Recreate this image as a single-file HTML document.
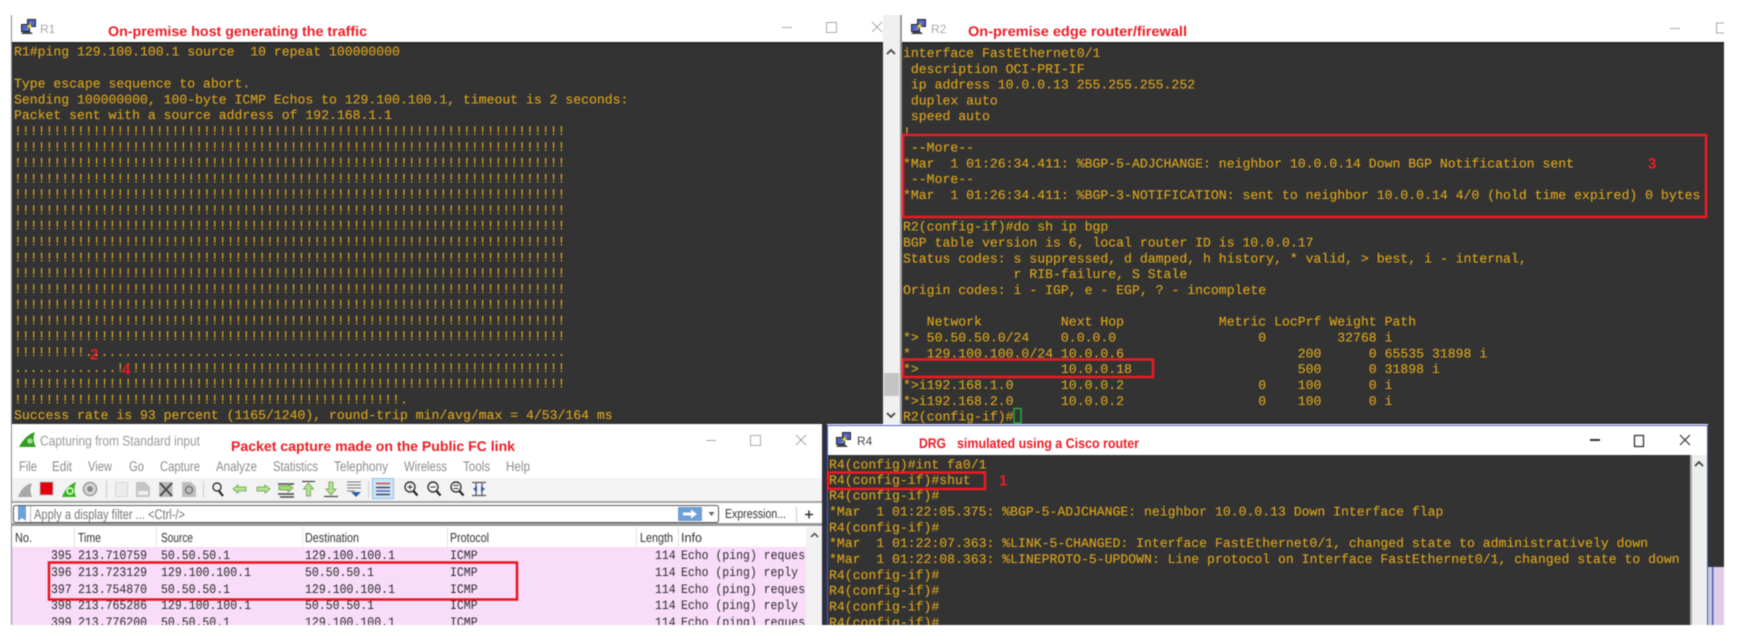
<!DOCTYPE html>
<html lang="en">
<head>
<meta charset="utf-8">
<title>Screenshot</title>
<style>
html,body{margin:0;padding:0;background:#fff;width:1746px;height:642px;overflow:hidden}
svg{display:block;position:absolute;left:0;top:0;filter:blur(.4px);text-rendering:geometricPrecision}
.t{font-family:"Liberation Mono",monospace;font-size:13.14px;fill:#dca51c;stroke:#dca51c;stroke-width:.12px;white-space:pre}
.b .t{font-size:13.16px}
.r{font-family:"Liberation Sans",sans-serif;font-size:14px;font-weight:bold;fill:#ec1c24}
.g{font-family:"Liberation Sans",sans-serif;font-size:14px;fill:#8c8c8c}
.h{font-family:"Liberation Sans",sans-serif;font-size:13px;fill:#333}
.m{font-family:"Liberation Mono",monospace;font-size:13px;fill:#2a2a2a;white-space:pre}
</style>
</head>
<body>
<svg width="1746" height="642" viewBox="0 0 1746 642" xmlns="http://www.w3.org/2000/svg">
<rect width="1746" height="642" fill="#fff"/>
<clipPath id="cw"><rect x="11" y="426" width="795" height="199"/></clipPath>

<!-- R1 window -->
<rect x="11" y="15" width="1" height="610" fill="#8a8a9a"/>
<rect x="12" y="43" width="871" height="381" fill="#333"/>
<rect x="12" y="42" width="871" height="1.5" fill="#222"/>
<rect x="883" y="15" width="17" height="409" fill="#f0f0f0"/>
<rect x="900" y="15" width="2" height="409" fill="#999"/>
<rect x="884" y="373" width="15" height="23" fill="#c4c4c4"/>
<path d="M887 54l4-4 4 4" fill="none" stroke="#444" stroke-width="1.8"/>
<path d="M887 413l4 4 4-4" fill="none" stroke="#444" stroke-width="1.8"/>
<g transform="translate(20,19)"><path d="M3 13h8l2 2H1z" fill="#444"/><rect x="7.5" y=".5" width="8" height="7" fill="#4f62c8" stroke="#222"/><rect x="1.5" y="5.5" width="8" height="7" fill="#4f62c8" stroke="#222"/><path d="M12 3L7 7l2 1-4 4 7-5-2-1z" fill="#f4e020"/></g>
<text x="40" y="33" font-family="Liberation Sans" font-size="12" fill="#aaa">R1</text>
<text class="r" x="108" y="36" textLength="259" lengthAdjust="spacingAndGlyphs">On-premise host generating the traffic</text>
<rect x="782" y="27" width="10" height="1" fill="#aaa"/>
<rect x="826.5" y="22.5" width="10" height="10" fill="none" stroke="#aaa"/>
<path d="M872 22l10 10M882 22l-10 10" stroke="#aaa"/>

<text class="t" x="14" y="55.5">R1#ping 129.100.100.1 source  10 repeat 100000000</text>
<text class="t" x="14" y="87.6">Type escape sequence to abort.</text>
<text class="t" x="14" y="103.4">Sending 100000000, 100-byte ICMP Echos to 129.100.100.1, timeout is 2 seconds:</text>
<text class="t" x="14" y="119.2">Packet sent with a source address of 192.168.1.1</text>
<text class="t" x="14" y="135">!!!!!!!!!!!!!!!!!!!!!!!!!!!!!!!!!!!!!!!!!!!!!!!!!!!!!!!!!!!!!!!!!!!!!!</text>
<text class="t" x="14" y="150.8">!!!!!!!!!!!!!!!!!!!!!!!!!!!!!!!!!!!!!!!!!!!!!!!!!!!!!!!!!!!!!!!!!!!!!!</text>
<text class="t" x="14" y="166.5">!!!!!!!!!!!!!!!!!!!!!!!!!!!!!!!!!!!!!!!!!!!!!!!!!!!!!!!!!!!!!!!!!!!!!!</text>
<text class="t" x="14" y="182.3">!!!!!!!!!!!!!!!!!!!!!!!!!!!!!!!!!!!!!!!!!!!!!!!!!!!!!!!!!!!!!!!!!!!!!!</text>
<text class="t" x="14" y="198.1">!!!!!!!!!!!!!!!!!!!!!!!!!!!!!!!!!!!!!!!!!!!!!!!!!!!!!!!!!!!!!!!!!!!!!!</text>
<text class="t" x="14" y="213.9">!!!!!!!!!!!!!!!!!!!!!!!!!!!!!!!!!!!!!!!!!!!!!!!!!!!!!!!!!!!!!!!!!!!!!!</text>
<text class="t" x="14" y="229.7">!!!!!!!!!!!!!!!!!!!!!!!!!!!!!!!!!!!!!!!!!!!!!!!!!!!!!!!!!!!!!!!!!!!!!!</text>
<text class="t" x="14" y="245.5">!!!!!!!!!!!!!!!!!!!!!!!!!!!!!!!!!!!!!!!!!!!!!!!!!!!!!!!!!!!!!!!!!!!!!!</text>
<text class="t" x="14" y="261.3">!!!!!!!!!!!!!!!!!!!!!!!!!!!!!!!!!!!!!!!!!!!!!!!!!!!!!!!!!!!!!!!!!!!!!!</text>
<text class="t" x="14" y="277.1">!!!!!!!!!!!!!!!!!!!!!!!!!!!!!!!!!!!!!!!!!!!!!!!!!!!!!!!!!!!!!!!!!!!!!!</text>
<text class="t" x="14" y="292.9">!!!!!!!!!!!!!!!!!!!!!!!!!!!!!!!!!!!!!!!!!!!!!!!!!!!!!!!!!!!!!!!!!!!!!!</text>
<text class="t" x="14" y="308.7">!!!!!!!!!!!!!!!!!!!!!!!!!!!!!!!!!!!!!!!!!!!!!!!!!!!!!!!!!!!!!!!!!!!!!!</text>
<text class="t" x="14" y="324.4">!!!!!!!!!!!!!!!!!!!!!!!!!!!!!!!!!!!!!!!!!!!!!!!!!!!!!!!!!!!!!!!!!!!!!!</text>
<text class="t" x="14" y="340.2">!!!!!!!!!!!!!!!!!!!!!!!!!!!!!!!!!!!!!!!!!!!!!!!!!!!!!!!!!!!!!!!!!!!!!!</text>
<text class="t" x="14" y="356">!!!!!!!!!.............................................................</text>
<text class="t" x="14" y="371.8">.............!!!!!!!!!!!!!!!!!!!!!!!!!!!!!!!!!!!!!!!!!!!!!!!!!!!!!!!!!</text>
<text class="t" x="14" y="387.6">!!!!!!!!!!!!!!!!!!!!!!!!!!!!!!!!!!!!!!!!!!!!!!!!!!!!!!!!!!!!!!!!!!!!!!</text>
<text class="t" x="14" y="403.4">!!!!!!!!!!!!!!!!!!!!!!!!!!!!!!!!!!!!!!!!!!!!!!!!!.</text>
<text class="t" x="14" y="419.2">Success rate is 93 percent (1165/1240), round-trip min/avg/max = 4/53/164 ms</text>
<text class="r" x="90" y="359.5" style="font-size:15px">2</text>
<text class="r" x="122" y="374.5" style="font-size:15px">4</text>

<!-- R2 window -->
<rect x="902" y="43" width="822" height="381" fill="#333"/>
<rect x="902" y="42" width="822" height="1.5" fill="#222"/>
<g transform="translate(910,19)"><path d="M3 13h8l2 2H1z" fill="#444"/><rect x="7.5" y=".5" width="8" height="7" fill="#4f62c8" stroke="#222"/><rect x="1.5" y="5.5" width="8" height="7" fill="#4f62c8" stroke="#222"/><path d="M12 3L7 7l2 1-4 4 7-5-2-1z" fill="#f4e020"/></g>
<text x="931" y="33" font-family="Liberation Sans" font-size="12" fill="#aaa">R2</text>
<text class="r" x="968" y="36" textLength="219" lengthAdjust="spacingAndGlyphs">On-premise edge router/firewall</text>
<rect x="1670" y="28" width="10" height="1" fill="#aaa"/>
<path d="M1724 23h-7.500v10h7.500" fill="none" stroke="#aaa"/>

<g class="b">
<text class="t" x="903" y="57">interface FastEthernet0/1</text>
<text class="t" x="903" y="72.8"> description OCI-PRI-IF</text>
<text class="t" x="903" y="88.7"> ip address 10.0.0.13 255.255.255.252</text>
<text class="t" x="903" y="104.5"> duplex auto</text>
<text class="t" x="903" y="120"> speed auto</text>
<text class="t" x="903" y="136.2">!</text>
<text class="t" x="903" y="151.5"> --More--</text>
<text class="t" x="903" y="167.3">*Mar  1 01:26:34.411: %BGP-5-ADJCHANGE: neighbor 10.0.0.14 Down BGP Notification sent</text>
<text class="t" x="903" y="183.1"> --More--</text>
<text class="t" x="903" y="199">*Mar  1 01:26:34.411: %BGP-3-NOTIFICATION: sent to neighbor 10.0.0.14 4/0 (hold time expired) 0 bytes</text>
<text class="t" x="903" y="230.6">R2(config-if)#do sh ip bgp</text>
<text class="t" x="903" y="246.5">BGP table version is 6, local router ID is 10.0.0.17</text>
<text class="t" x="903" y="262.3">Status codes: s suppressed, d damped, h history, * valid, > best, i - internal,</text>
<text class="t" x="903" y="278.1">              r RIB-failure, S Stale</text>
<text class="t" x="903" y="294">Origin codes: i - IGP, e - EGP, ? - incomplete</text>
<text class="t" x="903" y="325.6">   Network          Next Hop            Metric LocPrf Weight Path</text>
<text class="t" x="903" y="341.5">*> 50.50.50.0/24    0.0.0.0                  0         32768 i</text>
<text class="t" x="903" y="357.3">*  129.100.100.0/24 10.0.0.6                      200      0 65535 31898 i</text>
<text class="t" x="903" y="373.1">*>                  10.0.0.18                     500      0 31898 i</text>
<text class="t" x="903" y="389">*>i192.168.1.0      10.0.0.2                 0    100      0 i</text>
<text class="t" x="903" y="404.8">*>i192.168.2.0      10.0.0.2                 0    100      0 i</text>
<text class="t" x="903" y="420.6">R2(config-if)#</text>
</g>
<rect x="1014" y="408.500" width="7" height="14.500" fill="none" stroke="#22c040" stroke-width="1.2"/>
<rect x="903" y="135" width="803" height="82" fill="none" stroke="#ec1c24" stroke-width="2.500"/>
<rect x="903" y="359.500" width="250" height="17.500" fill="none" stroke="#ec1c24" stroke-width="2.500"/>
<text class="r" x="1648" y="168.5" style="font-size:15px">3</text>

<!-- right strip below R2 -->
<rect x="1708" y="424" width="16" height="143" fill="#333"/>
<rect x="1708" y="567" width="16" height="58" fill="#e0cce4"/>
<rect x="1708" y="567" width="4" height="58" fill="#c4c8d8"/>
<rect x="1712" y="567" width="1.500" height="58" fill="#4a60c0"/>

<!-- Wireshark window -->
<rect x="11" y="424" width="816" height="201" fill="#fff"/>
<rect x="11" y="424" width="1" height="201" fill="#8a8a9a"/>
<rect x="822" y="424" width="5" height="201" fill="#2e2e3e"/>
<path d="M19 447C24 438 29 434 35 432C33 437 33 442 36 447Z" fill="#2e9e1e"/>
<circle cx="30" cy="441" r="2.800" fill="#a8d8a0"/>
<text class="g" x="40" y="445.500" textLength="160" lengthAdjust="spacingAndGlyphs" style="fill:#999">Capturing from Standard input</text>
<text class="r" x="231" y="451" textLength="284" lengthAdjust="spacingAndGlyphs">Packet capture made on the Public FC link</text>
<rect x="706" y="440" width="10" height="1" fill="#aaa"/>
<rect x="750.500" y="435.500" width="10" height="10" fill="none" stroke="#aaa"/>
<path d="M796 435l10 10M806 435l-10 10" stroke="#aaa"/>

<text class="g" x="19" y="471" textLength="18" lengthAdjust="spacingAndGlyphs">File</text>
<text class="g" x="52" y="471" textLength="20" lengthAdjust="spacingAndGlyphs">Edit</text>
<text class="g" x="88" y="471" textLength="24" lengthAdjust="spacingAndGlyphs">View</text>
<text class="g" x="129" y="471" textLength="15" lengthAdjust="spacingAndGlyphs">Go</text>
<text class="g" x="160" y="471" textLength="40" lengthAdjust="spacingAndGlyphs">Capture</text>
<text class="g" x="216" y="471" textLength="41" lengthAdjust="spacingAndGlyphs">Analyze</text>
<text class="g" x="273" y="471" textLength="45" lengthAdjust="spacingAndGlyphs">Statistics</text>
<text class="g" x="334" y="471" textLength="54" lengthAdjust="spacingAndGlyphs">Telephony</text>
<text class="g" x="404" y="471" textLength="43" lengthAdjust="spacingAndGlyphs">Wireless</text>
<text class="g" x="463" y="471" textLength="27" lengthAdjust="spacingAndGlyphs">Tools</text>
<text class="g" x="506" y="471" textLength="24" lengthAdjust="spacingAndGlyphs">Help</text>

<!-- toolbar -->
<rect x="12" y="478" width="810" height="23" fill="#f3f3f3"/>
<rect x="12" y="501" width="810" height="2" fill="#a6a6a6"/>
<path d="M18 497C21 489 25 485 32 483C30 488 30 492 32 497Z" fill="#a8a8a8"/>
<rect x="40" y="482" width="13" height="13" fill="#e2000f" stroke="#b8b8b8"/>
<path d="M62 497C65 489 69 485 76 482C74 488 74 492 76 497Z" fill="#37b41e"/>
<circle cx="70" cy="491" r="3" fill="none" stroke="#e8ffe0" stroke-width="1.400"/>
<circle cx="90" cy="489" r="6.500" fill="#d8d8d8" stroke="#999" stroke-width="1.500"/>
<circle cx="90" cy="489" r="3" fill="#888"/>
<rect x="106" y="481" width="1" height="17" fill="#ccc"/>
<rect x="115.500" y="482.500" width="12" height="14" fill="#ececec" stroke="#d6d6d6"/>
<path d="M136 497v-15h9l5 5v10z" fill="#c4c4c4"/><rect x="138" y="491" width="10" height="4" fill="#eee"/>
<rect x="159" y="482" width="13.500" height="15" fill="#bbb"/><path d="M160 483l12 13M172 483l-12 13" stroke="#4a4a4a" stroke-width="2"/>
<path d="M182 497v-15h9l5 5v10z" fill="#bdbdbd"/><circle cx="189" cy="490" r="3.500" fill="none" stroke="#777" stroke-width="1.500"/>
<rect x="203" y="481" width="1" height="17" fill="#ccc"/>
<circle cx="217" cy="487" r="4" fill="#f4f4f4" stroke="#333" stroke-width="1.400"/><path d="M219 491l4 5" stroke="#222" stroke-width="2.200"/>
<path d="M233 489l5-4v2h8v4h-8v2z" fill="#b4e490" stroke="#6a9a50" stroke-width=".8"/>
<path d="M270 489l-5-4v2h-8v4h8v2z" fill="#b4e490" stroke="#6a9a50" stroke-width=".8"/>
<path d="M278 484h16M278 494h16M280 497h14" stroke="#444" stroke-width="1.500"/><path d="M279 489l0-3h9v-2l5 4-5 4v-2h-9z" fill="#9edc6e" stroke="#6a9a50" stroke-width=".8"/>
<path d="M302 481.500h13" stroke="#444" stroke-width="1.200"/><path d="M308.500 483l5 6h-3v7h-4v-7h-3z" fill="#b4e490" stroke="#6a9a50" stroke-width=".8"/>
<path d="M324 496.500h14" stroke="#444" stroke-width="1.200"/><path d="M331 495l5-6h-3v-7h-4v7h-3z" fill="#b4e490" stroke="#6a9a50" stroke-width=".8"/>
<path d="M347 482h14M347 485h14M347 488h14M347 491h8" stroke="#777" stroke-width="1"/><path d="M351 492h10l-5 5z" fill="#2a5fa8"/>
<rect x="368" y="481" width="1" height="17" fill="#ccc"/>
<rect x="372.500" y="478.500" width="21" height="20" fill="#cde3f7" stroke="#90c0e8"/>
<path d="M376 483.500h14" stroke="#d83030" stroke-width="1.300"/><path d="M376 487.500h14" stroke="#333" stroke-width="1.300"/><path d="M376 491h14" stroke="#5050c0" stroke-width="1.300"/><path d="M376 494.500h14" stroke="#333" stroke-width="1.300"/>
<circle cx="410" cy="487" r="5" fill="#f6f6f6" stroke="#333" stroke-width="1.400"/><path d="M413.500 491l4 4.500" stroke="#222" stroke-width="2.200"/><path d="M407.500 487h5M410 484.500v5" stroke="#333"/>
<circle cx="433" cy="487" r="5" fill="#f6f6f6" stroke="#333" stroke-width="1.400"/><path d="M436.500 491l4 4.500" stroke="#222" stroke-width="2.200"/><path d="M430.500 487h5" stroke="#333"/>
<circle cx="456" cy="487" r="5" fill="#f6f6f6" stroke="#333" stroke-width="1.400"/><path d="M459.500 491l4 4.500" stroke="#222" stroke-width="2.200"/><path d="M453.500 485.500h5M453.500 488.500h5" stroke="#333"/>
<path d="M472 482.500h14M472 495.500h14M476 482v14M482 482v14" stroke="#556" stroke-width="1.200"/><path d="M473 489l4-3v6zM485 489l-4-3v6z" fill="#2a5fa8"/>

<!-- filter bar -->
<rect x="13.500" y="505.500" width="705" height="17" rx="2" fill="#fff" stroke="#555"/>
<path d="M18 506h8v15l-4-3-4 3z" fill="#6d9fd8"/>
<rect x="30" y="506" width="1" height="16" fill="#bbb"/>
<text class="g" x="34" y="519" textLength="151" lengthAdjust="spacingAndGlyphs" style="fill:#777">Apply a display filter ... &lt;Ctrl-/&gt;</text>
<rect x="678" y="507" width="24" height="14" rx="1" fill="#6e9fd8"/>
<path d="M683 512.500h8v-3l6 4.500-6 4.500v-3h-8z" fill="#fff"/>
<path d="M708.500 512h6l-3 4z" fill="#666"/>
<text class="h" x="725" y="518" textLength="61" lengthAdjust="spacingAndGlyphs">Expression...</text>
<rect x="796" y="507" width="1" height="15" fill="#ccc"/>
<path d="M805 514.500h8M809 510.500v8" stroke="#333" stroke-width="1.500"/>
<rect x="12" y="523" width="810" height="3" fill="#9a9a9a"/>

<!-- packet table -->
<rect x="12" y="526" width="810" height="21" fill="#fff"/>
<rect x="74" y="527" width="1" height="20" fill="#e2e2e2"/><rect x="156" y="527" width="1" height="20" fill="#e2e2e2"/><rect x="302" y="527" width="1" height="20" fill="#e2e2e2"/><rect x="447" y="527" width="1" height="20" fill="#e2e2e2"/><rect x="636" y="527" width="1" height="20" fill="#e2e2e2"/><rect x="678" y="527" width="1" height="20" fill="#e2e2e2"/>
<text class="h" x="15" y="542" textLength="17" lengthAdjust="spacingAndGlyphs">No.</text>
<text class="h" x="78" y="542" textLength="23" lengthAdjust="spacingAndGlyphs">Time</text>
<text class="h" x="161" y="542" textLength="32" lengthAdjust="spacingAndGlyphs">Source</text>
<text class="h" x="305" y="542" textLength="54" lengthAdjust="spacingAndGlyphs">Destination</text>
<text class="h" x="450" y="542" textLength="39" lengthAdjust="spacingAndGlyphs">Protocol</text>
<text class="h" x="640" y="542" textLength="33" lengthAdjust="spacingAndGlyphs">Length</text>
<text class="h" x="681" y="542" textLength="21" lengthAdjust="spacingAndGlyphs">Info</text>
<rect x="12" y="547" width="794" height="78" fill="#f9dcf9"/>
<rect x="806" y="527" width="16" height="98" fill="#f2f2f2"/>
<path d="M811 537l3.500-3.500 3.500 3.500" fill="none" stroke="#444" stroke-width="1.500"/>
<g clip-path="url(#cw)">
<text class="m" x="51" y="559" textLength="20.700" lengthAdjust="spacingAndGlyphs">395</text><text class="m" x="78" y="559" textLength="69" lengthAdjust="spacingAndGlyphs">213.710759</text><text class="m" x="161" y="559" textLength="69" lengthAdjust="spacingAndGlyphs">50.50.50.1</text><text class="m" x="305" y="559" textLength="90" lengthAdjust="spacingAndGlyphs">129.100.100.1</text><text class="m" x="450" y="559" textLength="27.600" lengthAdjust="spacingAndGlyphs">ICMP</text><text class="m" x="655" y="559" textLength="20.700" lengthAdjust="spacingAndGlyphs">114</text><text class="m" x="681" y="559" textLength="131" lengthAdjust="spacingAndGlyphs">Echo (ping) request</text>
<text class="m" x="51" y="576" textLength="20.700" lengthAdjust="spacingAndGlyphs">396</text><text class="m" x="78" y="576" textLength="69" lengthAdjust="spacingAndGlyphs">213.723129</text><text class="m" x="161" y="576" textLength="90" lengthAdjust="spacingAndGlyphs">129.100.100.1</text><text class="m" x="305" y="576" textLength="69" lengthAdjust="spacingAndGlyphs">50.50.50.1</text><text class="m" x="450" y="576" textLength="27.600" lengthAdjust="spacingAndGlyphs">ICMP</text><text class="m" x="655" y="576" textLength="20.700" lengthAdjust="spacingAndGlyphs">114</text><text class="m" x="681" y="576" textLength="117" lengthAdjust="spacingAndGlyphs">Echo (ping) reply</text>
<text class="m" x="51" y="593" textLength="20.700" lengthAdjust="spacingAndGlyphs">397</text><text class="m" x="78" y="593" textLength="69" lengthAdjust="spacingAndGlyphs">213.754870</text><text class="m" x="161" y="593" textLength="69" lengthAdjust="spacingAndGlyphs">50.50.50.1</text><text class="m" x="305" y="593" textLength="90" lengthAdjust="spacingAndGlyphs">129.100.100.1</text><text class="m" x="450" y="593" textLength="27.600" lengthAdjust="spacingAndGlyphs">ICMP</text><text class="m" x="655" y="593" textLength="20.700" lengthAdjust="spacingAndGlyphs">114</text><text class="m" x="681" y="593" textLength="131" lengthAdjust="spacingAndGlyphs">Echo (ping) request</text>
<text class="m" x="51" y="609" textLength="20.700" lengthAdjust="spacingAndGlyphs">398</text><text class="m" x="78" y="609" textLength="69" lengthAdjust="spacingAndGlyphs">213.765286</text><text class="m" x="161" y="609" textLength="90" lengthAdjust="spacingAndGlyphs">129.100.100.1</text><text class="m" x="305" y="609" textLength="69" lengthAdjust="spacingAndGlyphs">50.50.50.1</text><text class="m" x="450" y="609" textLength="27.600" lengthAdjust="spacingAndGlyphs">ICMP</text><text class="m" x="655" y="609" textLength="20.700" lengthAdjust="spacingAndGlyphs">114</text><text class="m" x="681" y="609" textLength="117" lengthAdjust="spacingAndGlyphs">Echo (ping) reply</text>
<text class="m" x="51" y="626" textLength="20.700" lengthAdjust="spacingAndGlyphs">399</text><text class="m" x="78" y="626" textLength="69" lengthAdjust="spacingAndGlyphs">213.776200</text><text class="m" x="161" y="626" textLength="69" lengthAdjust="spacingAndGlyphs">50.50.50.1</text><text class="m" x="305" y="626" textLength="90" lengthAdjust="spacingAndGlyphs">129.100.100.1</text><text class="m" x="450" y="626" textLength="27.600" lengthAdjust="spacingAndGlyphs">ICMP</text><text class="m" x="655" y="626" textLength="20.700" lengthAdjust="spacingAndGlyphs">114</text><text class="m" x="681" y="626" textLength="131" lengthAdjust="spacingAndGlyphs">Echo (ping) request</text>
</g>
<rect x="49" y="562.500" width="468" height="37" fill="none" stroke="#e8141c" stroke-width="2.500"/>

<!-- R4 window -->
<rect x="827.500" y="425.500" width="880" height="200" fill="#fff" stroke="#4a60c0"/>
<rect x="828" y="455" width="862" height="170" fill="#333"/>
<rect x="1690" y="455" width="2" height="170" fill="#aaa"/>
<rect x="1692" y="455" width="15" height="170" fill="#eee"/>
<path d="M1695 466l4-4 4 4" fill="none" stroke="#444" stroke-width="1.800"/>
<g transform="translate(835,432)"><path d="M3 13h8l2 2H1z" fill="#444"/><rect x="7.500" y=".5" width="8" height="7" fill="#4f62c8" stroke="#222"/><rect x="1.500" y="5.500" width="8" height="7" fill="#4f62c8" stroke="#222"/><path d="M12 3L7 7l2 1-4 4 7-5-2-1z" fill="#f4e020"/></g>
<text x="857" y="445" font-family="Liberation Sans" font-size="12" fill="#444">R4</text>
<text class="r" x="919" y="448" textLength="27" lengthAdjust="spacingAndGlyphs">DRG</text>
<text class="r" x="957" y="448" textLength="182" lengthAdjust="spacingAndGlyphs">simulated using a Cisco router</text>
<rect x="1590" y="439" width="10" height="2" fill="#333"/>
<rect x="1634.500" y="435.500" width="9" height="11" fill="none" stroke="#333" stroke-width="1.300"/>
<path d="M1680 435l10 10M1690 435l-10 10" stroke="#333" stroke-width="1.200"/>

<text class="t" x="829" y="468.500">R4(config)#int fa0/1</text>
<text class="t" x="829" y="484">R4(config-if)#shut</text>
<text class="t" x="829" y="499.700">R4(config-if)#</text>
<text class="t" x="829" y="515.500">*Mar  1 01:22:05.375: %BGP-5-ADJCHANGE: neighbor 10.0.0.13 Down Interface flap</text>
<text class="t" x="829" y="531.300">R4(config-if)#</text>
<text class="t" x="829" y="547.200">*Mar  1 01:22:07.363: %LINK-5-CHANGED: Interface FastEthernet0/1, changed state to administratively down</text>
<text class="t" x="829" y="563">*Mar  1 01:22:08.363: %LINEPROTO-5-UPDOWN: Line protocol on Interface FastEthernet0/1, changed state to down</text>
<text class="t" x="829" y="578.800">R4(config-if)#</text>
<text class="t" x="829" y="594.600">R4(config-if)#</text>
<text class="t" x="829" y="610.500">R4(config-if)#</text>
<text class="t" x="829" y="626.300">R4(config-if)#</text>
<rect x="828" y="472.500" width="157" height="16.500" fill="none" stroke="#ec1c24" stroke-width="2.500"/>
<text class="r" x="999" y="485.500" style="font-size:15px">1</text>

<!-- bottom margin -->
<rect x="0" y="625" width="1746" height="17" fill="#fff"/>
</svg>
</body>
</html>
